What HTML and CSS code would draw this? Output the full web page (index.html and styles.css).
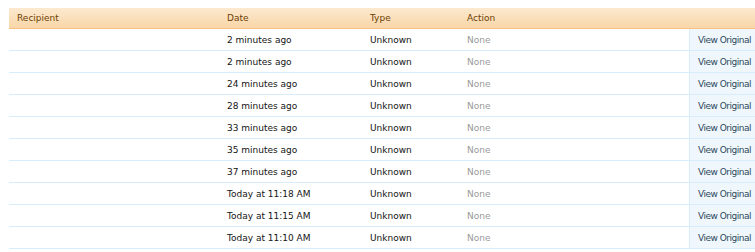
FILE: index.html
```html
<!DOCTYPE html>
<html>
<head>
<meta charset="utf-8">
<link rel="stylesheet" href="styles.css">
</head>
<body>
<div class="table">
  <div class="row head">
    <div class="c recip">Recipient</div>
    <div class="c date">Date</div>
    <div class="c type">Type</div>
    <div class="c action">Action</div>
    <div class="c view"></div>
  </div>
  <div class="row"><div class="c recip"></div><div class="c date">2 minutes ago</div><div class="c type">Unknown</div><div class="c action none">None</div><div class="c view link">View Original</div></div>
  <div class="row"><div class="c recip"></div><div class="c date">2 minutes ago</div><div class="c type">Unknown</div><div class="c action none">None</div><div class="c view link">View Original</div></div>
  <div class="row"><div class="c recip"></div><div class="c date">24 minutes ago</div><div class="c type">Unknown</div><div class="c action none">None</div><div class="c view link">View Original</div></div>
  <div class="row"><div class="c recip"></div><div class="c date">28 minutes ago</div><div class="c type">Unknown</div><div class="c action none">None</div><div class="c view link">View Original</div></div>
  <div class="row"><div class="c recip"></div><div class="c date">33 minutes ago</div><div class="c type">Unknown</div><div class="c action none">None</div><div class="c view link">View Original</div></div>
  <div class="row"><div class="c recip"></div><div class="c date">35 minutes ago</div><div class="c type">Unknown</div><div class="c action none">None</div><div class="c view link">View Original</div></div>
  <div class="row"><div class="c recip"></div><div class="c date">37 minutes ago</div><div class="c type">Unknown</div><div class="c action none">None</div><div class="c view link">View Original</div></div>
  <div class="row"><div class="c recip"></div><div class="c date">Today at 11:18 AM</div><div class="c type">Unknown</div><div class="c action none">None</div><div class="c view link">View Original</div></div>
  <div class="row"><div class="c recip"></div><div class="c date">Today at 11:15 AM</div><div class="c type">Unknown</div><div class="c action none">None</div><div class="c view link">View Original</div></div>
  <div class="row"><div class="c recip"></div><div class="c date">Today at 11:10 AM</div><div class="c type">Unknown</div><div class="c action none">None</div><div class="c view link">View Original</div></div>
</div>
</body>
</html>
```

FILE: styles.css
```css
html, body {
  margin: 0;
  padding: 0;
  background: #fff;
  overflow: hidden;
}
body {
  padding: 8px 0 0 9px;
  font-family: "DejaVu Sans", sans-serif;
  font-size: 9px;
  color: #141414;
}
.table {
  width: 760px;
}
.row {
  display: flex;
  height: 21px;
  border-bottom: 1px solid #d7edfc;
  align-items: stretch;
}
.row.head {
  height: 20px;
  background: linear-gradient(to bottom, #fce9cf, #f9d6a8);
  border-bottom: 1px solid #f6c382;
  color: #6d3f03;
}
.c {
  display: flex;
  align-items: center;
  padding-left: 8px;
  box-sizing: border-box;
  white-space: nowrap;
}
.recip { width: 210px; }
.date { width: 143px; }
.type { width: 97px; }
.action { width: 230px; }
.view { flex: 1; }
.none { color: #9a9a9a; }
.link {
  background: #f0f7fc;
  border-left: 1px solid #d7edfc;
  color: #2b485c;
  letter-spacing: -0.5px;
}
.head .view { background: transparent; }
```
